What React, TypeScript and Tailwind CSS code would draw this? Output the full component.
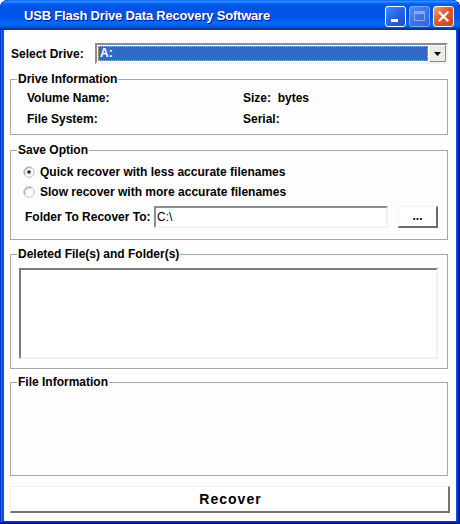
import React from "react";

function Radio({ checked, label }: { checked?: boolean; label: string }) {
  return (
    <div className="flex items-center h-[14px] pl-[6px]">
      <svg width="12" height="12" viewBox="0 0 12 12" className="mr-[5px] shrink-0">
        <circle cx="6" cy="6" r="5.3" fill="#fafafa" stroke="#c4c4c4" strokeWidth="1" />
        <path d="M2.2 8.5 A4.6 4.6 0 0 1 8.5 2.2" fill="none" stroke="#9a9a9a" strokeWidth="1" />
        {checked && <circle cx="6" cy="6" r="1.8" fill="#222" />}
      </svg>
      <span className="leading-[14px]">{label}</span>
    </div>
  );
}

function Group({
  title,
  h,
  className = "",
  children,
}: {
  title: string;
  h: string;
  className?: string;
  children?: React.ReactNode;
}) {
  return (
    <fieldset className={`border border-[#a7a7a7] px-[6px] m-0 ${h} ${className}`}>
      <legend className="px-[1px] leading-[14px] text-[12px]">{title}</legend>
      {children}
    </fieldset>
  );
}

export default function App() {
  return (
    <div className="w-[460px] h-[524px] flex flex-col rounded-t-[8px] bg-[#0055e5] shadow-[inset_-1px_-1px_#00138c,inset_1px_1px_#0831d9,inset_-2px_-2px_#001ea0,inset_2px_2px_#166aee,inset_-3px_-3px_#003bda,inset_3px_3px_#0855dd] font-['Liberation_Sans',Arial,sans-serif] overflow-hidden">
      {/* Title bar */}
      <div className="h-[30px] shrink-0 flex items-center pl-[24px] pr-[5px] rounded-t-[8px] bg-[linear-gradient(to_bottom,#0058ee_0%,#3593ff_4%,#288eff_6%,#127dff_8%,#036ffc_10%,#0262ee_14%,#0057e5_20%,#0054e3_24%,#0055eb_56%,#005bf5_66%,#026afe_76%,#0062ef_86%,#0052d6_92%,#0040ab_94%,#003092_100%)]">
        <span className="text-white text-[13px] font-bold tracking-[-0.2px] [text-shadow:1px_1px_#0f1089] pt-[1px]">
          USB Flash Drive Data Recovery Software
        </span>
        <div className="ml-auto flex gap-[3px] pt-[2px] pr-[1px]">
          {/* minimize */}
          <div className="w-[21px] h-[21px] rounded-[3px] border border-white bg-[linear-gradient(135deg,#3c8cff_0%,#2663e0_50%,#1d4fd0_100%)] flex items-end pl-[5px] pb-[4px]">
            <div className="w-[7px] h-[3px] bg-white" />
          </div>
          {/* maximize (disabled) */}
          <div className="w-[21px] h-[21px] rounded-[3px] border border-[#7ea6f2] bg-[linear-gradient(135deg,#4f8ef5_0%,#3a76e8_50%,#2f66dc_100%)] flex items-center justify-center">
            <div className="w-[11px] h-[10px] border border-[#86a9ee] border-t-[3px]" />
          </div>
          {/* close */}
          <div className="w-[21px] h-[21px] rounded-[3px] border border-white bg-[linear-gradient(135deg,#f0a080_0%,#e2582f_45%,#cc4419_100%)] flex items-center justify-center">
            <svg width="11" height="11" viewBox="0 0 11 11">
              <path d="M1.5 1.5 L9.5 9.5 M9.5 1.5 L1.5 9.5" stroke="#fff" strokeWidth="2.2" strokeLinecap="square" />
            </svg>
          </div>
        </div>
      </div>

      {/* Client area */}
      <div className="flex-1 mx-[4px] mb-[3px] bg-[#fdfdfd] pl-[6px] pr-[8px] pt-[13px] flex flex-col text-[12px] font-bold text-black">
        {/* Select drive */}
        <div className="flex items-center h-[21px] shrink-0">
          <span className="w-[85px] pl-[1px] leading-[14px]">Select Drive:</span>
          <div className="flex-1 h-[21px] flex border-2 border-t-[#8c8c8c] border-l-[#8c8c8c] border-b-[#f2f2f2] border-r-[#f2f2f2] bg-white">
            <div className="flex-1 m-[1px] bg-[#316ac5] border border-dotted border-[#c9b37c] flex items-center pl-[1px]">
              <span className="text-white leading-[13px]">A:</span>
            </div>
            <div className="w-[17px] bg-[#ecebe6] border border-t-[#fafafa] border-l-[#fafafa] border-b-[#8a8a8a] border-r-[#8a8a8a] flex items-center justify-center">
              <svg width="7" height="4" viewBox="0 0 7 4">
                <path d="M0 0 H7 L3.5 4 Z" fill="#000" />
              </svg>
            </div>
          </div>
        </div>

        {/* Drive Information */}
        <Group title="Drive Information" h="h-[63px]" className="mt-[8px] shrink-0">
          <div className="grid grid-cols-[216px_1fr] gap-y-[7px] pl-[10px] pt-[5px] leading-[14px]">
            <span>Volume Name:</span>
            <span>Size:&nbsp; bytes</span>
            <span>File System:</span>
            <span>Serial:</span>
          </div>
        </Group>

        {/* Save Option */}
        <Group title="Save Option" h="h-[97px]" className="mt-[8px] shrink-0">
          <div className="flex flex-col pt-[8px] gap-[6px]">
            <Radio checked label="Quick recover with less accurate filenames" />
            <Radio label="Slow recover with more accurate filenames" />
          </div>
          <div className="flex items-center mt-[7px] h-[22px]">
            <span className="w-[129px] ml-[8px] leading-[14px]">Folder To Recover To:</span>
            <div className="w-[234px] h-[22px] border-2 border-t-[#8c8c8c] border-l-[#8c8c8c] border-b-[#f2f2f2] border-r-[#f2f2f2] bg-white flex items-center pl-[1px]">
              <span className="font-normal leading-[14px]">C:\</span>
            </div>
            <div className="ml-[10px] w-[40px] h-[22px] border border-t-[#f4f4f4] border-l-[#f4f4f4] border-b-[#6f6b64] border-r-[#6f6b64] border-b-2 border-r-2 bg-white flex items-center justify-center">
              <span className="leading-[10px] pb-[2px]">...</span>
            </div>
          </div>
        </Group>

        {/* Deleted files */}
        <Group title="Deleted File(s) and Folder(s)" h="h-[122px]" className="mt-[7px] shrink-0">
          <div className="ml-[2px] mt-[7px] w-[419px] h-[91px] border-2 border-t-[#7d7d7d] border-l-[#7d7d7d] border-b-[#efefef] border-r-[#efefef] bg-white" />
        </Group>

        {/* File Information */}
        <Group title="File Information" h="h-[101px]" className="mt-[6px] shrink-0" />

        {/* Recover button */}
        <div className="mt-[10px] h-[27px] w-[440px] shrink-0 border border-t-[#ededed] border-l-[#ededed] border-b-2 border-r-2 border-b-[#7a746c] border-r-[#7a746c] bg-white flex items-center justify-center">
          <span className="text-[14px] tracking-[1px] leading-[16px] pl-[2px]">Recover</span>
        </div>
      </div>
    </div>
  );
}
